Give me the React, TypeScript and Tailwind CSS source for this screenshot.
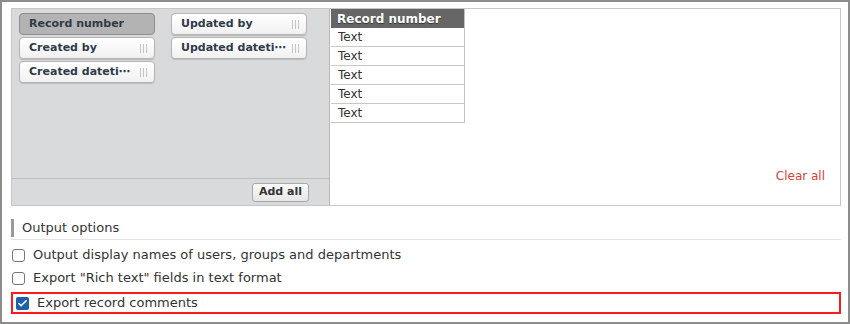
import { Check } from 'lucide-react';

const font = { fontFamily: '"DejaVu Sans", Verdana, sans-serif' };

function Grip() {
  return (
    <div className="flex gap-[2px] h-[9px]">
      <div className="w-px bg-[#c4c4c4]" />
      <div className="w-px bg-[#c4c4c4]" />
      <div className="w-px bg-[#c4c4c4]" />
    </div>
  );
}

function Chip({ label, active }: { label: string; active?: boolean }) {
  return (
    <div
      className={
        active
          ? 'h-[22px] w-[136px] flex items-center px-[9px] rounded-[4px] border border-[#8e8e8e] bg-[#b3b3b3] text-[11px] font-bold text-[#2f3a4a]'
          : 'h-[22px] w-[136px] flex items-center justify-between pl-[9px] pr-[7px] rounded-[4px] border border-[#b5b5b5] bg-gradient-to-b from-white to-[#f1f1f1] text-[11px] font-bold text-[#2f3a4a] shadow-[0_1px_1px_rgba(0,0,0,0.15)]'
      }
    >
      <span className="truncate">{label}</span>
      {!active && <Grip />}
    </div>
  );
}

function CheckRow({ label, checked }: { label: string; checked?: boolean }) {
  return (
    <div className="flex items-center gap-[8px] h-[22px]">
      {checked ? (
        <div className="w-[13px] h-[13px] rounded-[2px] bg-[#1f5ea8] flex items-center justify-center">
          <Check className="w-[11px] h-[11px] text-white" strokeWidth={3.5} />
        </div>
      ) : (
        <div className="w-[13px] h-[13px] rounded-[3px] border border-[#767676] bg-white" />
      )}
      <span className="text-[13px] text-[#333]">{label}</span>
    </div>
  );
}

export default function App() {
  const rows = ['Text', 'Text', 'Text', 'Text', 'Text'];
  return (
    <div style={font} className="w-[850px] h-[324px] border-2 border-[#8c8c8c] bg-white pl-[9px] pr-[7px] pt-[6px]">
      {/* Field picker */}
      <div className="flex h-[198px] border border-[#c6c6c6]">
        <div className="w-[318px] flex flex-col bg-[#d9dadb] border-r border-[#b9b9b9]">
          <div className="flex-1 flex gap-[16px] pl-[7px] pt-[4px]">
            <div className="flex flex-col gap-[2px]">
              <Chip label="Record number" active />
              <Chip label="Created by" />
              <Chip label="Created dateti⋯" />
            </div>
            <div className="flex flex-col gap-[2px]">
              <Chip label="Updated by" />
              <Chip label="Updated dateti⋯" />
            </div>
          </div>
          <div className="h-[27px] border-t border-[#bfbfbf] flex items-center justify-end pr-[20px]">
            <button className="h-[19px] px-[6px] rounded-[3px] border border-[#a9a9a9] bg-gradient-to-b from-[#fafafa] to-[#e6e6e6] text-[11px] font-bold text-[#333]">
              Add all
            </button>
          </div>
        </div>
        <div className="flex-1 flex flex-col pl-[1px] bg-white">
          <div className="w-[134px] border-r border-b border-[#c3c3c3]">
            <div className="h-[19px] bg-[#666] flex items-center pl-[6px] text-[12px] font-bold text-white [text-shadow:0_1px_1px_rgba(0,0,0,0.5)]">
              Record number
            </div>
            {rows.map((r, i) => (
              <div
                key={i}
                className={
                  i === 0
                    ? 'h-[18px] flex items-center pl-[7px] text-[12px] text-[#333]'
                    : 'h-[19px] flex items-center pl-[7px] text-[12px] text-[#333] border-t border-[#c8c8c8]'
                }
              >
                {r}
              </div>
            ))}
          </div>
          <div className="flex-1 flex items-end justify-end pr-[15px] pb-[20px]">
            <span className="text-[12px] text-[#d9413a]">Clear all</span>
          </div>
        </div>
      </div>

      {/* Output options */}
      <div className="mt-[13px] border-b border-[#e2e2e2] pb-[2px]">
        <div className="flex items-center h-[18px] border-l-[3px] border-[#9a9a9a] pl-[8px] text-[13px] text-[#333]">
          Output options
        </div>
      </div>
      <div className="mt-[4px] pl-[1px] flex flex-col gap-[1px]">
        <CheckRow label="Output display names of users, groups and departments" />
        <CheckRow label={'Export "Rich text" fields in text format'} />
      </div>
      <div className="mt-[3px] h-[22px] border-2 border-[#ff1a1a] flex items-center pl-[3px]">
        <CheckRow label="Export record comments" checked />
      </div>
    </div>
  );
}
